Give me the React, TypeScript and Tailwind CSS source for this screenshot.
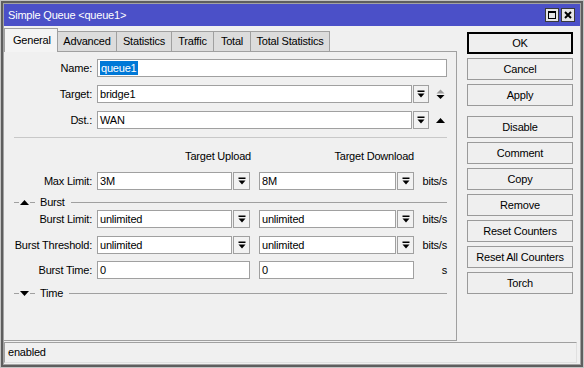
import React from "react";

const DropIcon = () => (
  <svg width="8" height="8" viewBox="0 0 8 8">
    <rect x="0.5" y="0.5" width="7" height="1.5" fill="#000" />
    <path d="M0.5 3.5h7L4 7.5z" fill="#000" />
  </svg>
);

const Field = ({ value, className, selected }: { value: string; className: string; selected?: boolean }) => (
  <div className={`h-[18px] border border-[#a0a0a0] bg-white flex items-center pl-[2px] shrink-0 ${className}`}>
    {selected ? <span className="bg-[#0078d7] text-white leading-[14px] px-[1px]">{value}</span> : <span>{value}</span>}
  </div>
);

const Drop = ({ className }: { className: string }) => (
  <div className={`h-[18px] ml-[1px] border border-[#a0a0a0] bg-[#f2f2f2] flex items-center justify-center shrink-0 ${className}`}>
    <DropIcon />
  </div>
);

const Label = ({ text }: { text: string }) => (
  <div className="w-[93px] pr-[5px] text-right shrink-0">{text}</div>
);

const Section = ({ title, open }: { title: string; open?: boolean }) => (
  <div className="flex items-center h-[14px] ml-[10px] mr-[9px]">
    <div className="w-[5px] border-t border-[#a0a0a0]" />
    <svg width="9" height="5" viewBox="0 0 9 5" className="mx-[1px]">
      {open ? <path d="M0 0h9L4.5 5z" fill="#000" /> : <path d="M0 5h9L4.5 0z" fill="#000" />}
    </svg>
    <div className="w-[5px] border-t border-[#a0a0a0]" />
    <span className="ml-[5px]">{title}</span>
    <div className="flex-1 ml-[6px] border-t border-[#a0a0a0]" />
  </div>
);

const LimitRow = ({ label, up, down, className }: { label: string; up: string; down: string; className: string }) => (
  <div className={`flex items-center h-[18px] ${className}`}>
    <Label text={label} />
    <Field value={up} className="w-[135px]" />
    <Drop className="w-[17px]" />
    <Field value={down} className="w-[137px] ml-[9px]" />
    <Drop className="w-[17px]" />
    <div className="w-[33px] text-right">bits/s</div>
  </div>
);

const Button = ({ text, def, className = "" }: { text: string; def?: boolean; className?: string }) => (
  <div
    className={`h-[22px] flex items-center justify-center bg-[#efefef] ${
      def ? "border-2 border-black" : "border border-[#9a9a9a]"
    } ${className}`}
  >
    {text}
  </div>
);

const tabs = [
  { name: "Advanced", w: "w-[60px]" },
  { name: "Statistics", w: "w-[56px]" },
  { name: "Traffic", w: "w-[43px]" },
  { name: "Total", w: "w-[38px]" },
  { name: "Total Statistics", w: "w-[80px]" },
];

export default function App() {
  return (
    <div className="w-[584px] h-[368px] bg-[#a3a3a3] border border-[#c4c4c4] font-['Liberation_Sans',Arial,sans-serif] text-[11px] tracking-[-0.2px] text-black">
      <div className="h-full border-2 border-[#5e5e5e] p-[1px] flex flex-col">
        {/* title bar */}
        <div className="h-[22px] bg-[#4b50c8] flex items-center pl-[4px] pr-[5px] shrink-0">
          <span className="text-white">Simple Queue &lt;queue1&gt;</span>
          <div className="ml-auto flex gap-[2px]">
            <div className="w-[14px] h-[14px] border border-[#3a3a3a] bg-[#e6e6e6] flex items-center justify-center">
              <div className="w-[8px] h-[8px] border border-black border-t-2" />
            </div>
            <div className="w-[14px] h-[14px] border border-[#3a3a3a] bg-[#e6e6e6] flex items-center justify-center">
              <svg width="8" height="8" viewBox="0 0 8 8">
                <path d="M1 1L7 7M7 1L1 7" stroke="#000" strokeWidth="2" />
              </svg>
            </div>
          </div>
        </div>

        <div className="flex-1 bg-[#f0f0f0] flex flex-col pt-[2px]">
          <div className="flex">
            {/* left: tabs + panel */}
            <div className="w-[453px] flex flex-col">
              <div className="h-[23px] flex items-end relative z-10">
                <div className="w-[54px] h-[24px] -mb-[1px] border border-b-0 border-[#a0a0a0] bg-[#f4f4f4] pl-[8px] flex items-center">
                  General
                </div>
                {tabs.map((t) => (
                  <div
                    key={t.name}
                    className={`${t.w} h-[20px] -ml-[1px] border border-b-0 border-[#a0a0a0] bg-[#dcdcdc] flex items-center justify-center`}
                  >
                    {t.name}
                  </div>
                ))}
              </div>
              <div className="h-[290px] border-t border-r border-b border-[#a0a0a0] flex flex-col pt-[7px]">
                <div className="flex items-center h-[18px]">
                  <Label text="Name:" />
                  <Field value="queue1" className="w-[350px]" selected />
                </div>
                <div className="flex items-center h-[18px] mt-[8px]">
                  <Label text="Target:" />
                  <Field value="bridge1" className="w-[315px]" />
                  <Drop className="w-[16px]" />
                  <svg width="9" height="13" viewBox="0 0 9 13" className="ml-[7px]">
                    <path d="M0.5 5.5h8L4.5 1.5z" fill="#9a9a9a" />
                    <path d="M0.5 7h8L4.5 11z" fill="#000" />
                  </svg>
                </div>
                <div className="flex items-center h-[18px] mt-[8px]">
                  <Label text="Dst.:" />
                  <Field value="WAN" className="w-[315px]" />
                  <Drop className="w-[16px]" />
                  <svg width="9" height="5" viewBox="0 0 9 5" className="ml-[7px]">
                    <path d="M0 5h9L4.5 0z" fill="#000" />
                  </svg>
                </div>
                <div className="mt-[8px] ml-[10px] mr-[9px] border-t border-[#c8c8c8]" />

                <div className="flex items-center h-[14px] mt-[11px]">
                  <div className="w-[93px] shrink-0" />
                  <div className="w-[154px] text-right">Target Upload</div>
                  <div className="w-[155px] ml-[8px] text-right">Target Download</div>
                </div>
                <LimitRow label="Max Limit:" up="3M" down="8M" className="mt-[9px]" />

                <div className="mt-[5px]">
                  <Section title="Burst" />
                </div>
                <LimitRow label="Burst Limit:" up="unlimited" down="unlimited" className="mt-[1px]" />
                <LimitRow label="Burst Threshold:" up="unlimited" down="unlimited" className="mt-[8px]" />
                <div className="flex items-center h-[18px] mt-[7px]">
                  <Label text="Burst Time:" />
                  <Field value="0" className="w-[153px]" />
                  <Field value="0" className="w-[155px] ml-[9px]" />
                  <div className="w-[33px] text-right">s</div>
                </div>
                <div className="mt-[7px]">
                  <Section title="Time" open />
                </div>
              </div>
            </div>

            {/* right: buttons */}
            <div className="w-[106px] ml-[10px] pt-[4px] flex flex-col gap-[4px]">
              <Button text="OK" def />
              <Button text="Cancel" />
              <Button text="Apply" />
              <Button text="Disable" className="mt-[6px]" />
              <Button text="Comment" />
              <Button text="Copy" />
              <Button text="Remove" />
              <Button text="Reset Counters" />
              <Button text="Reset All Counters" />
              <Button text="Torch" />
            </div>
          </div>

          {/* status bar */}
          <div className="mt-[1px] h-[21px] mr-[3px] border border-[#a0a0a0] border-r-[#e0e0e0] border-b-[#e0e0e0] flex items-center pl-[3px]">
            enabled
          </div>
        </div>
      </div>
    </div>
  );
}
